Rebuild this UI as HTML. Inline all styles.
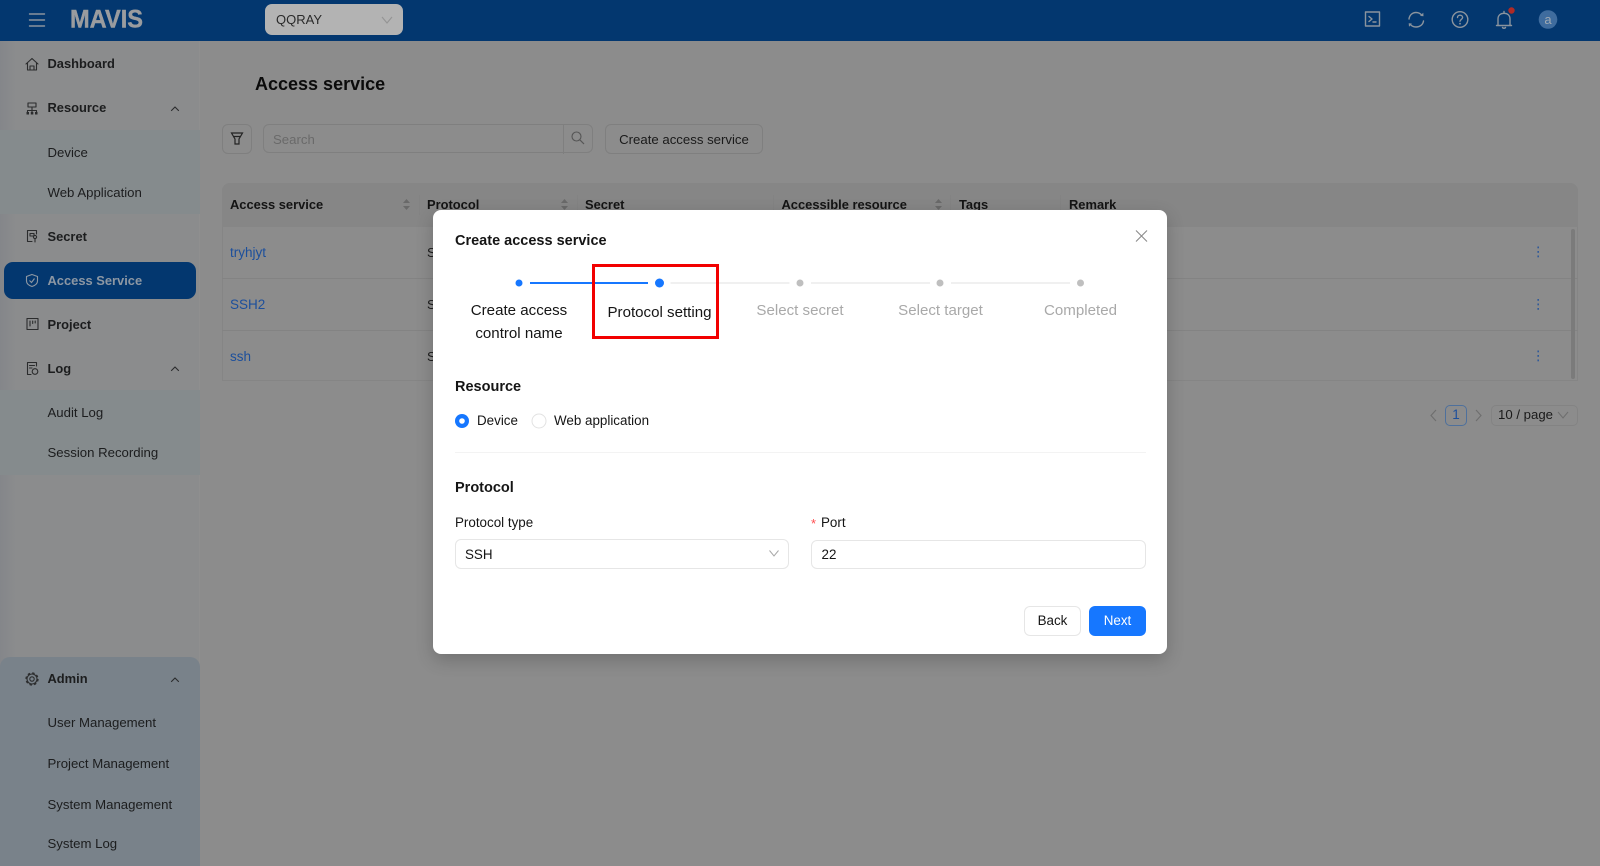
<!DOCTYPE html>
<html><head><meta charset="utf-8"><title>Access service</title>
<style>
html,body{margin:0;padding:0;width:1600px;height:866px;overflow:hidden;background:#8c8c8c;font-family:"Liberation Sans",sans-serif}
div,span{position:absolute;box-sizing:border-box}
svg{position:absolute;overflow:visible}
.t{line-height:20px;height:20px;white-space:nowrap;font-size:13.2px;color:#1a1a1a}
.b{font-weight:bold;color:#141414;font-size:12.9px}
.side{color:#1c1d1e}
.ic{fill:none;stroke:#2b2c2d;stroke-width:1.1;stroke-linecap:round;stroke-linejoin:round}
.hd{fill:none;stroke:#8b949e;stroke-width:1.4;stroke-linecap:round;stroke-linejoin:round}
.line{background:#838383}
.lk{color:#1c4f9c;font-size:13.5px}
.m{color:#151515}
.s{font-size:15.100px}
.f{font-size:13.400px}
.h{font-size:14.500px}
.box{background:#fff;border:1px solid #e6e6e6;border-radius:6px}
</style></head><body>

<!-- header -->
<div style="left:0;top:0;width:1600px;height:41px;background:#03376f"></div>
<svg style="left:0;top:0" width="200" height="41"><path d="M29.500 14H44.500M29.500 20H44.500M29.500 26H44.500" class="hd"/></svg>
<svg style="left:68px;top:6px" width="80" height="30"><text x="2" y="21.500" font-family="Liberation Sans" font-weight="bold" font-size="25" fill="#9a9c9f" stroke="#9a9c9f" stroke-width=".4" textLength="73" lengthAdjust="spacingAndGlyphs">MAVIS</text></svg>
<div style="left:265px;top:4px;width:138px;height:31px;background:#b3b3b3;border-radius:7px"></div>
<div class="t" style="left:276px;top:10px;font-size:13px;color:#2a2a2a">QQRAY</div>
<svg style="left:380px;top:14px" width="16" height="12"><path d="M2 3L7 9L12 3" fill="none" stroke="#949494" stroke-width="1.100"/></svg>

<svg style="left:1360px;top:7px" width="240" height="26">
 <rect x="5.500" y="5" width="14" height="14" class="hd"/>
 <path d="M9 9.500L12 12L9 14.500M13 15H16" class="hd" stroke-width="1.100"/>
 <path d="M49 12C49.500 8 52.500 5.500 56 5.500C58.500 5.500 60.500 6.500 62 8.500M63.500 14C63 17.500 60 20 56 20C53.500 20 51.500 19 50 17" class="hd" stroke-width="1.500"/>
 <path d="M60 8.800L63.500 9.200L63.300 5.700Z M52 16.600L48.700 16.200L49 19.800Z" fill="#8b949e"/>
 <circle cx="100" cy="12.500" r="7.800" class="hd"/>
 <path d="M97.500 10.500C97.500 9 98.700 8.200 100 8.200C101.500 8.200 102.600 9.200 102.600 10.500C102.600 12.300 100 12.500 100 14.300" class="hd" stroke-width="1.300"/>
 <circle cx="100" cy="16.700" r=".9" fill="#8b949e"/>
 <path d="M138 18.500V12C138 8.500 140.300 6.300 144 6.300C147.700 6.300 150 8.500 150 12V18.500ZM136.500 18.500H151.500M144 4.500V6M142.500 20.500C143 21.500 145 21.500 145.500 20.500" class="hd"/>
 <circle cx="151.500" cy="3.500" r="3.200" fill="#b02a26"/>
 <circle cx="188" cy="12.500" r="9.300" fill="#3f6c9e"/>
 <text x="188" y="17" text-anchor="middle" font-family="Liberation Sans" font-size="13" fill="#9fa9b3">a</text>
</svg>

<!-- sidebar -->
<div style="left:0;top:41px;width:200px;height:825px;background:#8b8c8d;border-right:1px solid #8f8f8f"></div>
<div style="left:0;top:41px;width:16px;height:825px;background:linear-gradient(90deg,#84868a,#8b8c8d)"></div>
<div style="left:0;top:130px;width:200px;height:84px;background:#858b8d"></div>
<div style="left:0;top:390px;width:200px;height:85px;background:#858b8d"></div>
<div style="left:0;top:657px;width:200px;height:209px;background:#79828a;border-radius:10px 10px 0 0"></div>
<div style="left:4px;top:262px;width:192px;height:37px;background:#03376f;border-radius:9px"></div>

<svg style="left:0;top:0" width="200" height="866">
 <path class="ic" d="M26 64L32 58.500L38 64M27.500 63V70H36.500V63M30 70V66H34V70"/>
 <path class="ic" d="M28 103H36V107H28ZM32 107V110M27.500 114V110.500H36.500V114M32 110.500V114"/>
 <rect x="26.500" y="112" width="2.500" height="2.500" fill="#2b2c2d"/><rect x="30.800" y="112" width="2.500" height="2.500" fill="#2b2c2d"/><rect x="35" y="112" width="2.500" height="2.500" fill="#2b2c2d"/>
 <path class="ic" d="M36.500 234V230.500H27.500V241.500H32M30 233.500H34V236H30Z"/>
 <circle cx="35" cy="237" r="1.600" class="ic"/><path class="ic" d="M35 238.600V242"/>
 <path d="M32 274.500L37.500 276.500V281C37.500 283.500 35 285.500 32 286.500C29 285.500 26.500 283.500 26.500 281V276.500Z" fill="none" stroke="#8d97a3" stroke-width="1.100"/>
 <path d="M29.500 280.500L31.500 282.500L34.500 278.500" fill="none" stroke="#8d97a3" stroke-width="1.100"/>
 <rect x="27" y="318.500" width="11" height="11" class="ic"/><path class="ic" d="M30 321V326M32.700 321V323.500M35.200 321V323"/>
 <path class="ic" d="M36.500 366V362.500H27.500V374.500H31M29.500 365.500H34.500M29.500 368H32"/>
 <circle cx="35" cy="371.500" r="2.800" class="ic"/>
 <circle cx="32" cy="679" r="5" class="ic"/>
 <circle cx="32" cy="679" r="6" fill="none" stroke="#2b2c2d" stroke-width="1.300" stroke-dasharray="2.500 2.210"/>
 <circle cx="32" cy="679" r="2.200" class="ic"/>
 <path class="ic" d="M171.500 110.500L175 107L178.500 110.500M171.500 370.500L175 367L178.500 370.500M171.500 681.500L175 678L178.500 681.500" stroke-width="1.300"/>
</svg>

<div class="t b side" style="left:47.500px;top:54px">Dashboard</div>
<div class="t b side" style="left:47.500px;top:98px">Resource</div>
<div class="t side" style="left:47.500px;top:143px">Device</div>
<div class="t side" style="left:47.500px;top:183px">Web Application</div>
<div class="t b side" style="left:47.500px;top:227px">Secret</div>
<div class="t b" style="left:47.500px;top:271px;color:#8d97a3">Access Service</div>
<div class="t b side" style="left:47.500px;top:315px">Project</div>
<div class="t b side" style="left:47.500px;top:359px">Log</div>
<div class="t side" style="left:47.500px;top:403px">Audit Log</div>
<div class="t side" style="left:47.500px;top:443px">Session Recording</div>
<div class="t b side" style="left:47.500px;top:669px">Admin</div>
<div class="t side" style="left:47.500px;top:713px">User Management</div>
<div class="t side" style="left:47.500px;top:754px">Project Management</div>
<div class="t side" style="left:47.500px;top:795px">System Management</div>
<div class="t side" style="left:47.500px;top:834px">System Log</div>

<!-- content -->
<div class="t b" style="left:255px;top:74px;font-size:18px;color:#0b0b0b">Access service</div>
<div style="left:222px;top:124px;width:30px;height:30px;border:1px solid #7f7f7f;border-radius:6px"></div>
<svg style="left:222px;top:124px" width="30" height="30"><path d="M9.500 9H20.500L17 15V20H13V15ZM11 12.500H19" fill="none" stroke="#232323" stroke-width="1.200"/></svg>
<div style="left:263px;top:124px;width:330px;height:29px;border:1px solid #7f7f7f;border-radius:6px"></div>
<div style="left:563px;top:124px;width:1px;height:30px;background:#7f7f7f"></div>
<div class="t" style="left:273px;top:130px;color:#6a6a6a">Search</div>
<svg style="left:570px;top:130px" width="16" height="16"><circle cx="6.500" cy="6.500" r="4.500" fill="none" stroke="#555" stroke-width="1.100"/><path d="M10 10L14 14" stroke="#555" stroke-width="1.200"/></svg>
<div style="left:605px;top:124px;width:158px;height:30px;border:1px solid #7f7f7f;border-radius:6px"></div>
<div class="t" style="left:605px;top:130px;width:158px;text-align:center;color:#1a1a1a">Create access service</div>

<div style="left:222px;top:183px;width:1356px;height:198px;border:1px solid #858585;border-radius:8px 8px 0 0"></div>
<div style="left:222px;top:183px;width:1356px;height:44px;background:#868686;border-radius:8px 8px 0 0"></div>
<div class="line" style="left:222px;top:278px;width:1356px;height:1px"></div>
<div class="line" style="left:222px;top:330px;width:1356px;height:1px"></div>
<div class="line" style="left:419px;top:195px;width:1px;height:20px"></div>
<div class="line" style="left:577px;top:195px;width:1px;height:20px"></div>
<div class="line" style="left:773px;top:195px;width:1px;height:20px"></div>
<div class="line" style="left:950px;top:195px;width:1px;height:20px"></div>
<div class="line" style="left:1060px;top:195px;width:1px;height:20px"></div>
<div class="t b" style="left:230px;top:195px">Access service</div>
<div class="t b" style="left:427px;top:195px">Protocol</div>
<div class="t b" style="left:585px;top:195px">Secret</div>
<div class="t b" style="left:781.500px;top:195px">Accessible resource</div>
<div class="t b" style="left:959px;top:195px">Tags</div>
<div class="t b" style="left:1069px;top:195px">Remark</div>
<svg style="left:0;top:0" width="1600" height="450">
 <path d="M403 203L406.500 199L410 203ZM403 206L406.500 210L410 206ZM561 203L564.500 199L568 203ZM561 206L564.500 210L568 206ZM935 203L938.500 199L942 203ZM935 206L938.500 210L942 206Z" fill="#696969"/>
 <g fill="#1c4f9c"><rect x="1537.500" y="246.500" width="1.300" height="1.800"/><rect x="1537.500" y="251" width="1.300" height="1.800"/><rect x="1537.500" y="255.500" width="1.300" height="1.800"/>
 <rect x="1537.500" y="299" width="1.300" height="1.800"/><rect x="1537.500" y="303.500" width="1.300" height="1.800"/><rect x="1537.500" y="308" width="1.300" height="1.800"/>
 <rect x="1537.500" y="350.500" width="1.300" height="1.800"/><rect x="1537.500" y="355" width="1.300" height="1.800"/><rect x="1537.500" y="359.500" width="1.300" height="1.800"/></g>
 <path d="M1436 410L1431 415.500L1436 421M1476 410L1481 415.500L1476 421" fill="none" stroke="#6e6e6e" stroke-width="1.100"/>
 <path d="M1558 412L1563 418L1568 412" fill="none" stroke="#6e6e6e" stroke-width="1"/>
</svg>
<div class="t lk" style="left:230px;top:243px">tryhjyt</div>
<div class="t lk" style="left:230px;top:295px">SSH2</div>
<div class="t lk" style="left:230px;top:347px">ssh</div>
<div class="t" style="left:427px;top:243px">S</div>
<div class="t" style="left:427px;top:295px">S</div>
<div class="t" style="left:427px;top:347px">S</div>
<div style="left:1571px;top:229px;width:4px;height:150px;background:#7b7b7b;border-radius:2px"></div>
<div style="left:1445px;top:405px;width:22px;height:21px;border:1px solid #4e709c;border-radius:5px"></div>
<div class="t lk" style="left:1445px;top:405px;width:22px;text-align:center">1</div>
<div style="left:1491px;top:405px;width:87px;height:21px;border:1px solid #838383;border-radius:5px"></div>
<div class="t" style="left:1498px;top:405px">10 / page</div>

<!-- modal -->
<div style="left:433px;top:210px;width:734px;height:444px;background:#fff;border-radius:8px;box-shadow:0 6px 18px rgba(0,0,0,.2)"></div>
<div class="t b m" style="left:455px;top:231px;font-size:14.500px">Create access service</div>
<svg style="left:433px;top:210px" width="734" height="443">
 <path d="M703 20.500L714 31.500M714 20.500L703 31.500" stroke="#8a8a8a" stroke-width="1.100"/>
 <circle cx="86" cy="73" r="3.500" fill="#1677ff"/>
 <rect x="97" y="72" width="118" height="2" fill="#1677ff"/>
 <circle cx="226.500" cy="73" r="4.500" fill="#1677ff"/>
 <rect x="237.500" y="72" width="119" height="2" fill="#f0f0f0"/>
 <circle cx="367" cy="73" r="3.500" fill="#bfbfbf"/>
 <rect x="378" y="72" width="119" height="2" fill="#f0f0f0"/>
 <circle cx="507" cy="73" r="3.500" fill="#bfbfbf"/>
 <rect x="518" y="72" width="119" height="2" fill="#f0f0f0"/>
 <circle cx="647.500" cy="73" r="3.500" fill="#bfbfbf"/>
 <circle cx="29" cy="211" r="7" fill="#1677ff"/><circle cx="29" cy="211" r="2.800" fill="#fff"/>
 <circle cx="106" cy="211" r="7" fill="#fff" stroke="#e2e2e2"/>
</svg>
<div style="left:592px;top:264px;width:127px;height:75px;border:3px solid #f20000"></div>
<div class="t m s" style="left:439px;top:301px;width:160px;text-align:center">Create access</div>
<div class="t m s" style="left:439px;top:324px;width:160px;text-align:center">control name</div>
<div class="t m s" style="left:579.500px;top:303px;width:160px;text-align:center">Protocol setting</div>
<div class="t s" style="left:720px;top:301px;width:160px;text-align:center;color:#a9a9a9">Select secret</div>
<div class="t s" style="left:860.500px;top:301px;width:160px;text-align:center;color:#a9a9a9">Select target</div>
<div class="t s" style="left:1000.500px;top:301px;width:160px;text-align:center;color:#a9a9a9">Completed</div>
<div class="t b m h" style="left:455px;top:377px">Resource</div>
<div class="t m f" style="left:477px;top:411px">Device</div>
<div class="t m f" style="left:554px;top:411px">Web application</div>
<div style="left:455px;top:452px;width:691px;height:1px;background:#f3f3f3"></div>
<div class="t b m h" style="left:455px;top:478px">Protocol</div>
<div class="t m f" style="left:455px;top:513px">Protocol type</div>
<div class="t" style="left:811px;top:514px;font-size:13px;color:#ff4d4f">*</div>
<div class="t m f" style="left:821px;top:513px">Port</div>
<div class="box" style="left:455px;top:539px;width:334px;height:30px"></div>
<div class="t m f" style="left:465px;top:545px">SSH</div>
<svg style="left:768px;top:548px" width="14" height="12"><path d="M1.500 2.500L6 8L10.500 2.500" fill="none" stroke="#a8a8a8" stroke-width="1"/></svg>
<div class="box" style="left:811px;top:540px;width:335px;height:29px"></div>
<div class="t m f" style="left:821.500px;top:545px">22</div>
<div class="box" style="left:1024px;top:606px;width:57px;height:30px"></div>
<div class="t m f" style="left:1024px;top:611px;width:57px;text-align:center">Back</div>
<div style="left:1089px;top:606px;width:57px;height:30px;background:#1677ff;border-radius:6px"></div>
<div class="t f" style="left:1089px;top:611px;width:57px;text-align:center;color:#fff">Next</div>
</body></html>
